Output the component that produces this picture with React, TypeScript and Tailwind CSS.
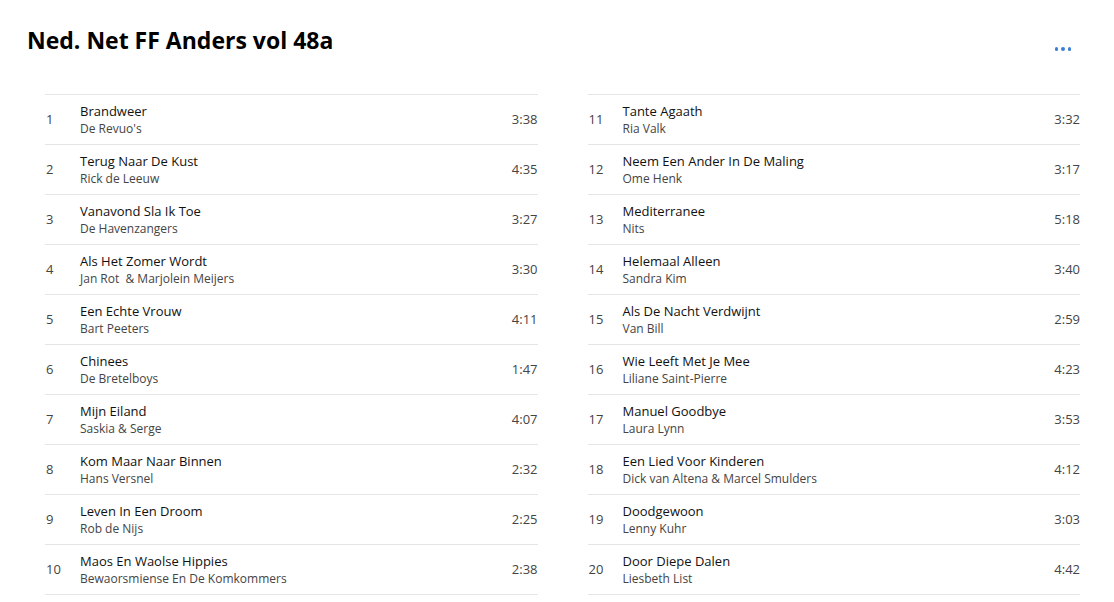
import React from 'react';

type Track = { n: number; title: string; artist: string; time: string };

const tracks: Track[] = [
  { n: 1, title: 'Brandweer', artist: "De Revuo's", time: '3:38' },
  { n: 2, title: 'Terug Naar De Kust', artist: 'Rick de Leeuw', time: '4:35' },
  { n: 3, title: 'Vanavond Sla Ik Toe', artist: 'De Havenzangers', time: '3:27' },
  { n: 4, title: 'Als Het Zomer Wordt', artist: 'Jan Rot  & Marjolein Meijers', time: '3:30' },
  { n: 5, title: 'Een Echte Vrouw', artist: 'Bart Peeters', time: '4:11' },
  { n: 6, title: 'Chinees', artist: 'De Bretelboys', time: '1:47' },
  { n: 7, title: 'Mijn Eiland', artist: 'Saskia & Serge', time: '4:07' },
  { n: 8, title: 'Kom Maar Naar Binnen', artist: 'Hans Versnel', time: '2:32' },
  { n: 9, title: 'Leven In Een Droom', artist: 'Rob de Nijs', time: '2:25' },
  { n: 10, title: 'Maos En Waolse Hippies', artist: 'Bewaorsmiense En De Komkommers', time: '2:38' },
  { n: 11, title: 'Tante Agaath', artist: 'Ria Valk', time: '3:32' },
  { n: 12, title: 'Neem Een Ander In De Maling', artist: 'Ome Henk', time: '3:17' },
  { n: 13, title: 'Mediterranee', artist: 'Nits', time: '5:18' },
  { n: 14, title: 'Helemaal Alleen', artist: 'Sandra Kim', time: '3:40' },
  { n: 15, title: 'Als De Nacht Verdwijnt', artist: 'Van Bill', time: '2:59' },
  { n: 16, title: 'Wie Leeft Met Je Mee', artist: 'Liliane Saint-Pierre', time: '4:23' },
  { n: 17, title: 'Manuel Goodbye', artist: 'Laura Lynn', time: '3:53' },
  { n: 18, title: 'Een Lied Voor Kinderen', artist: 'Dick van Altena & Marcel Smulders', time: '4:12' },
  { n: 19, title: 'Doodgewoon', artist: 'Lenny Kuhr', time: '3:03' },
  { n: 20, title: 'Door Diepe Dalen', artist: 'Liesbeth List', time: '4:42' },
];

const TrackRow = ({ track }: { track: Track }) => (
  <div className="h-[50px] flex items-center border-t border-[#e5e5e5]">
    <span className="w-[35px] pl-px text-[13px] text-[#444]">{track.n}</span>
    <div className="flex-1 flex flex-col leading-[17px]">
      <span className="text-[13px] text-[#111]">{track.title}</span>
      <span className="text-[12px] text-[#444] whitespace-pre">{track.artist}</span>
    </div>
    <span className="text-[13px] text-[#444]">{track.time}</span>
  </div>
);

const App = () => {
  return (
    <div
      className="w-[1114px] h-[602px] bg-white overflow-hidden"
      style={{ fontFamily: '"Open Sans", "Noto Sans", sans-serif' }}
    >
      <div className="flex items-start justify-between pl-[27px] pr-[43px] pt-[25px]">
        <h1 className="font-bold text-[23px] leading-[30px] text-black">
          Ned. Net FF Anders vol 48a
        </h1>
        <div className="flex gap-[3px] mt-[22px]">
          <span className="w-[3.5px] h-[3.5px] rounded-full bg-[#3a7fd5]" />
          <span className="w-[3.5px] h-[3.5px] rounded-full bg-[#3a7fd5]" />
          <span className="w-[3.5px] h-[3.5px] rounded-full bg-[#3a7fd5]" />
        </div>
      </div>
      <div className="grid grid-cols-2 gap-[50px] pl-[45px] pr-[34px] mt-[39px]">
        <div className="flex flex-col border-b border-[#e5e5e5]">
          {tracks.slice(0, 10).map((t) => (
            <TrackRow key={t.n} track={t} />
          ))}
        </div>
        <div className="flex flex-col border-b border-[#e5e5e5]">
          {tracks.slice(10).map((t) => (
            <TrackRow key={t.n} track={t} />
          ))}
        </div>
      </div>
    </div>
  );
};

export default App;
